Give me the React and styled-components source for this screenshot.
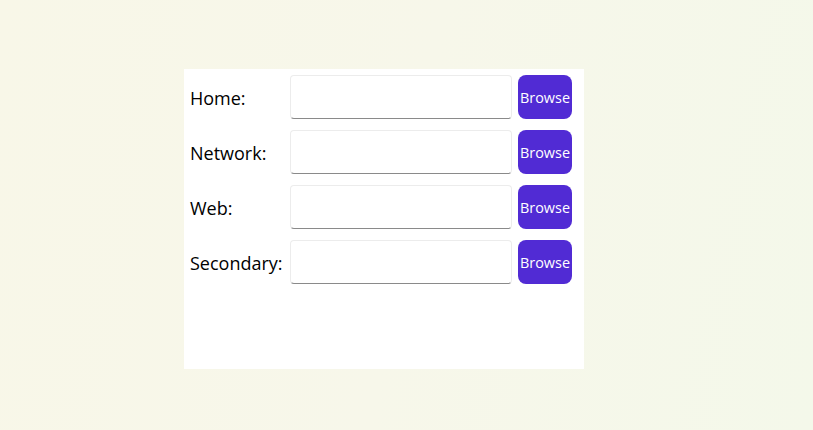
import React from "react";
import styled, { createGlobalStyle } from "styled-components";

const Global = createGlobalStyle`
  html, body { margin: 0; padding: 0; }
  body {
    width: 813px;
    height: 430px;
    overflow: hidden;
    background: linear-gradient(100deg, #f8f7e8 0%, #f7f7ea 50%, #f4f8ea 100%);
    font-family: "Open Sans", "Noto Sans", sans-serif;
  }
`;

const Page = styled.div`
  padding: 69px 0 0 184px;
`;

const Panel = styled.div`
  width: 400px;
  height: 300px;
  box-sizing: border-box;
  background: #ffffff;
  padding: 6px;
  display: grid;
  grid-template-columns: 94px 222px 54px;
  grid-auto-rows: 44px;
  column-gap: 6px;
  row-gap: 11px;
  align-content: start;
`;

const Label = styled.div`
  display: flex;
  align-items: center;
  padding-top: 1px;
  font-size: 18px;
  color: #000000;
  white-space: nowrap;
`;

const Field = styled.input`
  box-sizing: border-box;
  width: 222px;
  height: 44px;
  margin: 0;
  border: 1px solid #ececec;
  border-bottom: 1px solid #8a8a8a;
  border-radius: 4px;
  background: #fff;
  outline: none;
  font-family: inherit;
  font-size: 14px;
`;

const Browse = styled.button`
  box-sizing: border-box;
  width: 54px;
  height: 44px;
  padding: 1px 0 0;
  border: none;
  border-radius: 8px;
  background: #512bd4;
  color: #ffffff;
  font-family: "Open Sans", "Noto Sans", sans-serif;
  font-size: 14.4px;
  cursor: pointer;
`;

const rows = ["Home:", "Network:", "Web:", "Secondary:"];

export default function App() {
  return (
    <>
      <Global />
      <Page>
        <Panel>
          {rows.map((r) => (
            <React.Fragment key={r}>
              <Label>{r}</Label>
              <Field type="text" />
              <Browse>Browse</Browse>
            </React.Fragment>
          ))}
        </Panel>
      </Page>
    </>
  );
}
